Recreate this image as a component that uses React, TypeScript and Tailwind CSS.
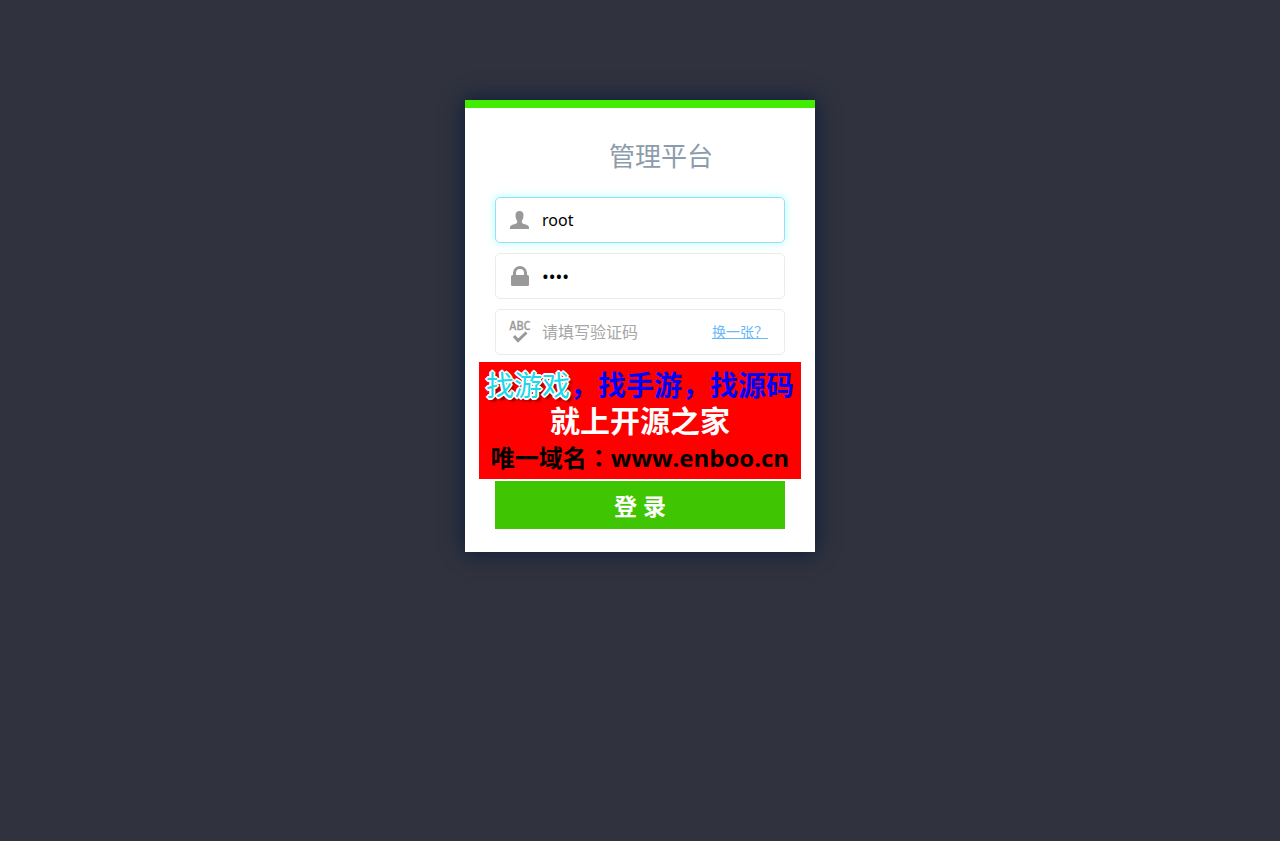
import { useState } from "react";
import type { InputHTMLAttributes, ReactNode } from "react";

type FieldProps = InputHTMLAttributes<HTMLInputElement> & {
  id: string;
  label: string;
  icon: ReactNode;
  active?: boolean;
  children?: ReactNode;
};

function UserIcon() {
  return (
    <svg className="size-6 shrink-0 fill-[#999]" viewBox="0 0 24 24" aria-hidden="true">
      <path d="M11.500 3c2.800 0 4 1.600 4 4.300 0 2.400-.6 4.300-1.700 5.400v1.800c.3.900 1.500 1.300 3 1.800 2.500.8 4.200 1.500 4.200 3.200V21H2v-1.500c0-1.700 1.700-2.400 4.200-3.200 1.500-.5 2.700-.9 3-1.800v-1.800C8.100 11.600 7.500 9.700 7.500 7.300 7.500 4.600 8.700 3 11.500 3Z" />
    </svg>
  );
}

function LockIcon() {
  return (
    <svg className="size-6 shrink-0" viewBox="0 0 24 24" aria-hidden="true">
      <path d="M6.500 12V9a5.500 5.500 0 0 1 11 0v3" fill="none" stroke="#999" strokeWidth="3" />
      <rect x="3" y="11" width="18" height="11" rx="1.500" fill="#999" />
    </svg>
  );
}

function CodeIcon() {
  return (
    <svg className="size-6 shrink-0" viewBox="0 0 24 24" aria-hidden="true">
      <text x="12" y="10" textAnchor="middle" fontSize="12" fill="#999" stroke="#999" strokeWidth="0.3" className="font-['DejaVu_Sans_Mono',monospace]">
        ABC
      </text>
      <path d="m6 16 4 4.500 8.500-8" fill="none" stroke="#999" strokeWidth="3" />
    </svg>
  );
}

function Field({ id, label, icon, active, children, className, ...rest }: FieldProps) {
  return (
    <div
      className={`flex h-[46px] items-center gap-2 rounded-[5px] border bg-white px-3 ${
        active ? "border-[#9cdff5] shadow-[0_0_8px_#aff]" : "border-[#ebebeb]"
      }`}
    >
      <label htmlFor={id} aria-label={label}>
        {icon}
      </label>
      <input
        id={id}
        className={`h-8 w-full min-w-0 flex-1 bg-transparent pl-0.5 text-black outline-none placeholder:text-[#a6a6a6] ${className ?? "text-base"}`}
        {...rest}
      />
      {children}
    </div>
  );
}

export default function App() {
  const [username, setUsername] = useState("root");
  const [password, setPassword] = useState("root");
  const [code, setCode] = useState("");
  const [focused, setFocused] = useState("username");

  return (
    <div className="min-h-screen bg-[#30323e] px-4 pt-[100px] pb-10 font-['Noto_Sans','Noto_Sans_CJK_SC',sans-serif]">
      <form
        className="mx-auto w-full max-w-[350px] border-t-8 border-[#43ed02] bg-white px-[30px] pb-[23px] shadow-[0_0_20px_#07193a]"
        onSubmit={(e) => e.preventDefault()}
      >
        <h1 className="pt-7 pb-[21px] pl-[42px] text-center text-[26px] leading-10 text-[#8c9cab]">管理平台</h1>

        <div className="flex flex-col gap-2.5">
          <Field
            id="username"
            label="用户名"
            icon={<UserIcon />}
            active={focused === "username"}
            type="text"
            value={username}
            onFocus={() => setFocused("username")}
            onChange={(e) => setUsername(e.target.value)}
          />
          <Field
            id="password"
            label="密码"
            icon={<LockIcon />}
            active={focused === "password"}
            type="password"
            className="text-lg"
            value={password}
            onFocus={() => setFocused("password")}
            onChange={(e) => setPassword(e.target.value)}
          />
          <Field
            id="code"
            label="验证码"
            icon={<CodeIcon />}
            active={focused === "code"}
            type="text"
            placeholder="请填写验证码"
            value={code}
            onFocus={() => setFocused("code")}
            onChange={(e) => setCode(e.target.value)}
          >
            <a href="#" className="mr-1 shrink-0 text-sm text-[#69b8f7] underline">
              换一张？
            </a>
          </Field>
        </div>

        {/* banner is a bit wider than the fields */}
        <div className="-mx-4 mt-[7px] mb-0.5 h-[117px] overflow-hidden bg-[#f00] pt-[5px] text-center font-['Open_Sans','Noto_Sans_CJK_SC',sans-serif] font-bold leading-9 whitespace-nowrap">
          <p className="text-[28px] leading-9 text-[#00f]">
            <span className="font-normal text-[#1ad9ea] [text-shadow:2px_0_#fff,-2px_0_#fff,0_2px_#fff,0_-2px_#fff,1px_1px_#fff,-1px_1px_#fff,1px_-1px_#fff,-1px_-1px_#fff,3px_3px_3px_#500]">
              找游戏
            </span>
            ，找手游，找源码
          </p>
          <p className="text-[30px] leading-9 text-white">就上开源之家</p>
          <p className="text-2xl leading-9 text-black">
            唯一域名<span className="font-['Noto_Sans_CJK_TC',sans-serif]">：</span>www.enboo.cn
          </p>
        </div>

        <button type="submit" className="h-12 w-full cursor-pointer bg-[#40c502] pt-0.5 text-[23px] font-bold text-white">
          登 录
        </button>
      </form>
    </div>
  );
}
